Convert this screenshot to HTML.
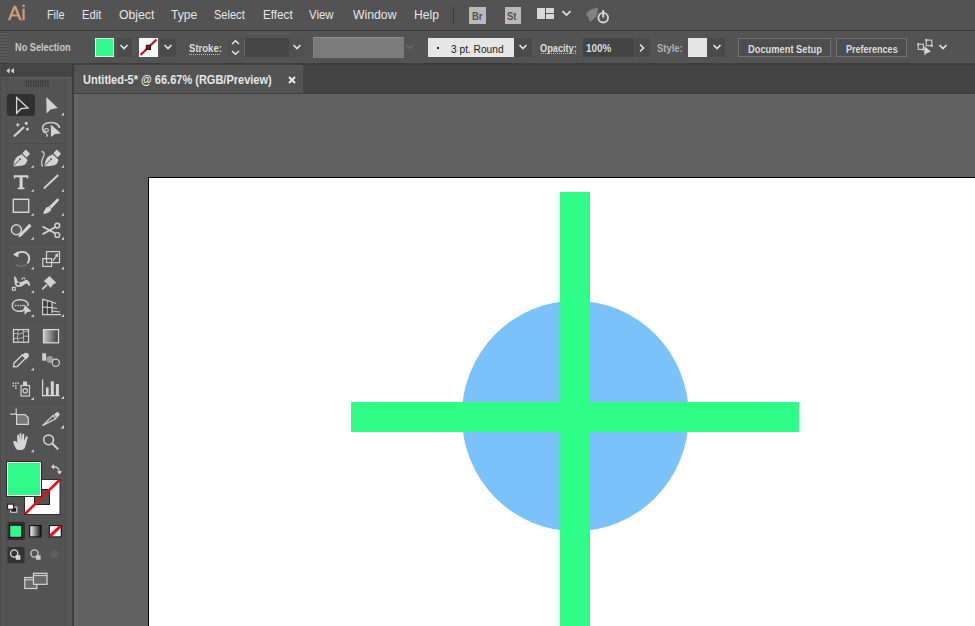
<!DOCTYPE html>
<html><head><meta charset="utf-8">
<style>
*{margin:0;padding:0;box-sizing:border-box}
html,body{width:975px;height:626px;overflow:hidden;background:#606060;font-family:"Liberation Sans",sans-serif}
.a{position:absolute}
.t{position:absolute;white-space:nowrap;line-height:1;transform-origin:0 0}
#menubar{left:0;top:0;width:975px;height:30px;background:#535353}
#menuline{left:0;top:30px;width:975px;height:1px;background:#383838}
#ctrl{left:0;top:31px;width:975px;height:33px;background:#535353}
#ctrlline{left:0;top:63px;width:975px;height:2px;background:#3c3c3c}
.mi{font-size:13px;color:#e6e6e6;top:8px}
.lb{font-size:10.4px;color:#dcdcdc;font-weight:bold}
#tabstrip{left:72px;top:65px;width:903px;height:29px;background:#444444}
#tab{left:73px;top:65px;width:230px;height:28px;background:#535353}
#tools{left:0;top:64px;width:72px;height:562px;background:#535353}
#canvas{left:72px;top:94px;width:903px;height:532px;background:#606060}
#artboard{left:148px;top:177px;width:827px;height:449px;background:#fff;border-left:1px solid #000;border-top:1px solid #000}
.dd{position:absolute;background:#4a4a4a}
</style></head><body>
<div id="menubar" class="a"></div>
<div id="menuline" class="a"></div>
<div id="ctrl" class="a"></div>
<div id="ctrlline" class="a"></div>

<!-- menu -->
<div class="t" style="left:8px;top:3px;font-size:20px;color:#cf9f7c;-webkit-text-stroke:0.4px #cf9f7c">Ai</div>
<div class="t mi" style="left:46.5px;transform:scaleX(0.83)">File</div>
<div class="t mi" style="left:81.5px;transform:scaleX(0.86)">Edit</div>
<div class="t mi" style="left:119px;transform:scaleX(0.94)">Object</div>
<div class="t mi" style="left:171px;transform:scaleX(0.93)">Type</div>
<div class="t mi" style="left:214px;transform:scaleX(0.85)">Select</div>
<div class="t mi" style="left:262.5px;transform:scaleX(0.9)">Effect</div>
<div class="t mi" style="left:309px;transform:scaleX(0.88)">View</div>
<div class="t mi" style="left:353px;transform:scaleX(0.94)">Window</div>
<div class="t mi" style="left:414px;transform:scaleX(0.93)">Help</div>
<div class="a" style="left:453px;top:6px;width:1px;height:18px;background:#3e3e3e"></div>
<div class="a" style="left:469px;top:7px;width:16.5px;height:16.5px;background:#bababa"></div>
<div class="t" style="left:471.5px;top:10.5px;font-size:10.5px;color:#505050;font-weight:bold;transform:scaleX(0.9)">Br</div>
<div class="a" style="left:504.5px;top:7px;width:16.5px;height:16.5px;background:#bababa"></div>
<div class="t" style="left:507px;top:10.5px;font-size:10.5px;color:#505050;font-weight:bold;transform:scaleX(0.9)">St</div>
<svg class="a" style="left:536px;top:7px" width="40" height="14">
  <rect x="1" y="1" width="8" height="11" fill="#d8d8d8"/>
  <rect x="10" y="1" width="8" height="5" fill="#d8d8d8"/>
  <rect x="10" y="7" width="8" height="5" fill="#d8d8d8"/>
  <path d="M26.5 4.2 L30.5 8 L34.5 4.2" stroke="#e0e0e0" stroke-width="1.7" fill="none"/>
</svg>
<svg class="a" style="left:584px;top:5px" width="28" height="20">
  <path d="M2 9 C5 5 9 3 14 2.5 C13 6 14 9 12 12 C9 14 8 16 6 17 C5 14 4 12 2 9 Z" fill="#8a8a8a" opacity="0.85"/>
  <circle cx="19.2" cy="12.7" r="4.8" stroke="#d6d6d6" stroke-width="1.9" fill="none"/>
  <rect x="18.2" y="5" width="2" height="7.5" fill="#d6d6d6"/>
</svg>

<!-- control bar -->
<div class="a" style="left:0;top:32px;width:8px;height:31px;background:repeating-linear-gradient(#4a4a4a 0 1px,#5a5a5a 1px 3px)"></div>
<div class="t lb" style="left:15px;top:42.5px;transform:scaleX(0.884);color:#c8c8c8">No Selection</div>
<!-- fill swatch -->
<div class="a" style="left:95px;top:38px;width:19px;height:19px;background:#e8f5ee"></div>
<div class="a" style="left:96px;top:39px;width:17px;height:17px;background:#2ff98a"></div>
<div class="dd" style="left:117px;top:38px;width:15px;height:19px"></div>
<svg class="a" style="left:119px;top:43px" width="10" height="8"><path d="M1.5 2 L5 5.5 L8.5 2" stroke="#e6e6e6" stroke-width="1.6" fill="none"/></svg>
<!-- stroke swatch -->
<div class="a" style="left:139px;top:38px;width:19px;height:19px;background:#f8f8f8"></div>
<svg class="a" style="left:139px;top:38px" width="19" height="19"><line x1="1.5" y1="17" x2="17.5" y2="1.5" stroke="#cc0a14" stroke-width="2"/><rect x="7.3" y="7.3" width="4.2" height="4.2" fill="#c00010" stroke="#1a1a1a" stroke-width="1"/></svg>
<div class="dd" style="left:160px;top:38px;width:16px;height:19px"></div>
<svg class="a" style="left:163px;top:43px" width="10" height="8"><path d="M1.5 2 L5 5.5 L8.5 2" stroke="#e6e6e6" stroke-width="1.6" fill="none"/></svg>
<!-- Stroke label -->
<div class="t lb" style="left:189px;top:44px;transform:scaleX(0.92)">Stroke:</div>
<div class="a" style="left:189px;top:54px;width:31px;height:1px;background:repeating-linear-gradient(90deg,#bbb 0 1px,transparent 1px 2px)"></div>
<div class="dd" style="left:227px;top:38px;width:77px;height:19px;background:#505050"></div>
<div class="a" style="left:245px;top:38px;width:44px;height:19px;background:#454545"></div><div class="a" style="left:244px;top:39px;width:1px;height:17px;background:#686868"></div><div class="a" style="left:248px;top:33px;width:41px;height:1px;background:#5d5d5d"></div>
<svg class="a" style="left:229px;top:39px" width="14" height="17"><path d="M3 5 L6.5 1.8 L10 5" stroke="#e6e6e6" stroke-width="1.5" fill="none"/><path d="M3 12 L6.5 15.2 L10 12" stroke="#e6e6e6" stroke-width="1.5" fill="none"/></svg>
<svg class="a" style="left:292px;top:43px" width="10" height="8"><path d="M1.5 2 L5 5.5 L8.5 2" stroke="#e6e6e6" stroke-width="1.6" fill="none"/></svg>
<!-- gray disabled bar -->
<div class="a" style="left:312.5px;top:36.5px;width:91px;height:21.5px;background:#7b7b7b;border-top:1.5px solid #8c8c8c;border-left:1.5px solid #868686"></div>
<svg class="a" style="left:405px;top:43px" width="10" height="8"><path d="M1.5 2 L5 5.5 L8.5 2" stroke="#6a6a6a" stroke-width="1.4" fill="none"/></svg>
<!-- 3 pt round -->
<div class="a" style="left:428px;top:38px;width:86px;height:19px;background:#e6e6e6"></div>
<div class="a" style="left:437px;top:46.5px;width:2px;height:2px;background:#222"></div>
<div class="t" style="left:451px;top:43.5px;font-size:10.6px;color:#1a1a1a;transform:scaleX(0.96)">3 pt. Round</div>
<div class="dd" style="left:514px;top:38px;width:18px;height:19px"></div>
<svg class="a" style="left:518px;top:43px" width="10" height="8"><path d="M1.5 2 L5 5.5 L8.5 2" stroke="#e6e6e6" stroke-width="1.6" fill="none"/></svg>
<!-- opacity -->
<div class="t lb" style="left:540px;top:43.5px;transform:scaleX(0.885)">Opacity:</div>
<div class="a" style="left:541px;top:53px;width:35px;height:1px;background:repeating-linear-gradient(90deg,#bbb 0 1px,transparent 1px 2px)"></div>
<div class="a" style="left:583px;top:38px;width:51px;height:19px;background:#444"></div>
<div class="t lb" style="left:585.5px;top:44px;transform:scaleX(0.95)">100%</div>
<div class="dd" style="left:635px;top:38px;width:15px;height:19px"></div>
<svg class="a" style="left:638px;top:43px" width="8" height="10"><path d="M2 1.5 L5.5 5 L2 8.5" stroke="#e6e6e6" stroke-width="1.6" fill="none"/></svg>
<!-- style -->
<div class="t lb" style="left:657px;top:44px;transform:scaleX(0.91);color:#b0b0b0">Style:</div>
<div class="a" style="left:688px;top:38px;width:19px;height:19px;background:#e4e4e4"></div>
<div class="dd" style="left:708px;top:38px;width:17px;height:19px"></div>
<svg class="a" style="left:712px;top:43px" width="10" height="8"><path d="M1.5 2 L5 5.5 L8.5 2" stroke="#e6e6e6" stroke-width="1.6" fill="none"/></svg>
<!-- buttons -->
<div class="a" style="left:738px;top:38px;width:93px;height:19px;border:1px solid #707070;background:#4d4d4d"></div>
<div class="t lb" style="left:748px;top:44.5px;transform:scaleX(0.896)">Document Setup</div>
<div class="a" style="left:836px;top:38px;width:71px;height:19px;border:1px solid #707070;background:#4d4d4d"></div>
<div class="t lb" style="left:845.5px;top:44.5px;transform:scaleX(0.868)">Preferences</div>
<svg class="a" style="left:914px;top:37px" width="36" height="22">
  <rect x="4.2" y="7.2" width="5.2" height="5.2" fill="none" stroke="#d0d0d0" stroke-width="1.1"/>
  <rect x="12.2" y="3.1" width="5.6" height="5.6" fill="none" stroke="#d0d0d0" stroke-width="1.1"/>
  <path d="M3.2 6.2h2v2h-2zM8.4 11.4h2v2h-2zM11.2 2.1h2v2h-2zM16.8 7.7h2v2h-2z" fill="#d0d0d0"/>
  <path d="M10.4 9.3 L10.4 18.5 L12.6 16.2 L17 14.4 Z" fill="#d6d6d6"/>
  <path d="M25.5 8 L29 11.5 L32.5 8" stroke="#e6e6e6" stroke-width="1.6" fill="none"/>
</svg>

<div id="tabstrip" class="a"></div>
<div id="tab" class="a"></div><div class="a" style="left:72px;top:93px;width:903px;height:1px;background:#3d3d3d"></div>
<div class="t" style="left:83px;top:73.5px;font-size:12px;color:#e6e6e6;font-weight:bold;transform:scaleX(0.917)">Untitled-5* @ 66.67% (RGB/Preview)</div>
<svg class="a" style="left:287px;top:75px" width="10" height="10"><path d="M2 2 L8 8 M8 2 L2 8" stroke="#eee" stroke-width="1.8"/></svg>
<div id="tools" class="a"></div>
<div id="canvas" class="a"></div>
<!-- toolbar -->
<div class="a" style="left:0;top:64px;width:72px;height:14px;background:#454545"></div>
<div class="a" style="left:0;top:77px;width:72px;height:1px;background:#5c5c5c"></div>
<svg class="a" style="left:5px;top:67px" width="11" height="8"><path d="M4.6 1 L1.2 3.8 L4.6 6.6 Z M9 1 L5.6 3.8 L9 6.6 Z" fill="#cfcfcf"/></svg>
<svg class="a" style="left:0;top:0" width="60" height="90"><rect x="25.8" y="80" width="1.1" height="7" fill="#3e3e3e"/><rect x="28.2" y="80" width="1.1" height="7" fill="#3e3e3e"/><rect x="30.6" y="80" width="1.1" height="7" fill="#3e3e3e"/><rect x="33.0" y="80" width="1.1" height="7" fill="#3e3e3e"/><rect x="35.4" y="80" width="1.1" height="7" fill="#3e3e3e"/><rect x="37.8" y="80" width="1.1" height="7" fill="#3e3e3e"/><rect x="40.2" y="80" width="1.1" height="7" fill="#3e3e3e"/><rect x="42.6" y="80" width="1.1" height="7" fill="#3e3e3e"/><rect x="45.0" y="80" width="1.1" height="7" fill="#3e3e3e"/><rect x="47.4" y="80" width="1.1" height="7" fill="#3e3e3e"/></svg>
<div class="a" style="left:6px;top:78px;width:1px;height:548px;background:#4b4b4b"></div>
<div class="a" style="left:65px;top:78px;width:1px;height:548px;background:#4b4b4b"></div>
<div class="a" style="left:66px;top:78px;width:6px;height:548px;background:#555555"></div>
<div class="a" style="left:71.5px;top:65px;width:2.5px;height:561px;background:#3c3c3c"></div><div class="a" style="left:0;top:64px;width:1px;height:562px;background:#4a4a4a"></div>
<div class="a" style="left:74px;top:94px;width:4px;height:532px;background:#656565"></div>
<div class="a" style="left:7px;top:94px;width:28px;height:22px;background:#303030;border-radius:3px"></div>
<svg class="a" style="left:0;top:0" width="72" height="626">
<g fill="#d2d2d2" stroke="none">
<!-- sub-tool triangles -->
<path d="M61 115.5 L64 115.5 L64 112.5 Z"/>
<path d="M31 167.8 L33.8 167.8 L33.8 165 Z"/><path d="M61.3 167.8 L64 167.8 L64 165 Z"/>
<path d="M31 191.8 L33.8 191.8 L33.8 189 Z"/><path d="M61.3 191.8 L64 191.8 L64 189 Z"/>
<path d="M31 215.8 L33.8 215.8 L33.8 213 Z"/><path d="M61.3 215.8 L64 215.8 L64 213 Z"/>
<path d="M31 239.7 L33.8 239.7 L33.8 236.8 Z"/><path d="M61.3 239.7 L64 239.7 L64 236.8 Z"/>
<path d="M31 269.6 L33.8 269.6 L33.8 266.6 Z"/><path d="M61.3 269.6 L64 269.6 L64 266.6 Z"/>
<path d="M31 293 L33.8 293 L33.8 290 Z"/><path d="M61.3 293 L64 293 L64 290 Z"/>
<path d="M31 317 L33.8 317 L33.8 314 Z"/><path d="M61.3 317 L64 317 L64 314 Z"/>
<path d="M30.9 370.6 L33.9 370.6 L33.9 367.6 Z"/>
<path d="M30.9 400 L33.9 400 L33.9 397 Z"/><path d="M61 399 L64 399 L64 396 Z"/>
<path d="M60.6 428.4 L64 428.4 L64 425 Z"/>
<path d="M30.9 452.2 L33.9 452.2 L33.9 449 Z"/>
</g>
<g stroke="#4b4b4b" stroke-width="1">
<line x1="8" y1="143.5" x2="64" y2="143.5"/>
<line x1="8" y1="243.5" x2="64" y2="243.5"/>
<line x1="8" y1="321.5" x2="64" y2="321.5"/>
<line x1="8" y1="403.5" x2="64" y2="403.5"/>
</g>
<!-- selection -->
<path d="M16.6 97.5 L28 108 L21 108.7 L16.6 113.3 Z" fill="none" stroke="#d8d8d8" stroke-width="1.3" stroke-linejoin="miter"/>
<path d="M46.3 97 L57.8 108 L50.5 109.5 L46.6 113.6 Z" fill="#d2d2d2"/>
<!-- magic wand -->
<line x1="13.8" y1="136.5" x2="24" y2="127" stroke="#d2d2d2" stroke-width="2.2"/>
<path d="M17.8 122.5 L18.6 124.2 L20.3 124.8 L18.6 125.4 L17.8 127.2 L17 125.4 L15.3 124.8 L17 124.2 Z" fill="#d2d2d2"/>
<circle cx="26.2" cy="123.3" r="1.5" fill="#d2d2d2"/>
<circle cx="27.4" cy="129.2" r="1.4" fill="#d2d2d2"/>
<!-- lasso -->
<path d="M45 133 C41 129 42 124 48 122.8 C54 121.8 59 124 59.5 128" fill="none" stroke="#cfcfcf" stroke-width="1.5"/>
<circle cx="46.5" cy="130.3" r="1.8" fill="none" stroke="#cfcfcf" stroke-width="1.2"/>
<path d="M47 134 L47 137 M45.5 132 C46 134 47 135 48 136" stroke="#cfcfcf" stroke-width="1" fill="none"/>
<path d="M50.8 124.5 L61 133.5 L55 134 L51 137 Z" fill="#d2d2d2"/>
<!-- pen -->
<g fill="#d4d4d4">
<path d="M13.3 166.2 C13.8 162 15 158.5 17.5 156.5 L21.8 154.3 L27.6 160 L25.5 164.2 C23.2 165.8 18.5 166.2 13.3 166.2 Z"/>
<path d="M22.4 153.2 L25.8 149.6 L30 153.8 L26.6 157.4 Z"/>
<path d="M44.3 166.2 C44.8 162 46 158.5 48.5 156.5 L52.8 154.3 L58.6 160 L56.5 164.2 C54.2 165.8 49.5 166.2 44.3 166.2 Z"/>
<path d="M53.4 153.2 L56.8 149.6 L61 153.8 L57.6 157.4 Z"/>
</g>
<path d="M13.6 165.7 L19.5 159.8 M44.6 165.7 L50.5 159.8" stroke="#535353" stroke-width="1"/>
<circle cx="20" cy="159.3" r="1" fill="#535353"/><circle cx="51" cy="159.3" r="1" fill="#535353"/>
<path d="M42.5 166.5 C40 162 42.5 159 43.8 156 C44.8 153.5 44 151.5 41.5 151.5" fill="none" stroke="#cfcfcf" stroke-width="1.3"/>
<!-- type -->
<path d="M13.8 175.2 H28.3 V178.6 H26.8 V177.2 H22.6 V187.4 H24.4 V189.2 H17.8 V187.4 H19.6 V177.2 H15.3 V178.6 H13.8 Z" fill="#d6d6d6"/>
<!-- line -->
<line x1="43.8" y1="188.5" x2="58.2" y2="175" stroke="#d2d2d2" stroke-width="1.8"/>
<!-- rect -->
<rect x="13.3" y="199.3" width="15.4" height="13" fill="#5c5c5c" stroke="#d6d6d6" stroke-width="1.4"/>
<!-- brush -->
<path d="M57.5 198.3 L59.3 200 L51.5 208.5 L49 206.5 Z" fill="#d6d6d6"/>
<path d="M48.5 206.5 L51.5 209 C50.5 212 47 213.8 43.2 213.8 C44 210.5 45.5 207.5 48.5 206.5 Z" fill="#d6d6d6"/>
<!-- shaper -->
<circle cx="16.4" cy="229.8" r="5" fill="#5a5a5a" stroke="#d2d2d2" stroke-width="1.4"/>
<path d="M29.2 223.8 L31.6 226 L21 236.6 L18.6 237.5 L18.8 235 Z" fill="#d4d4d4"/>
<!-- scissors -->
<circle cx="57.3" cy="225.6" r="2.4" fill="none" stroke="#d4d4d4" stroke-width="1.4"/>
<circle cx="57.3" cy="235" r="2.4" fill="none" stroke="#d4d4d4" stroke-width="1.4"/>
<path d="M42.5 226.5 L55.5 233.5 M42.5 234.3 L55.5 227" stroke="#d4d4d4" stroke-width="1.8"/>
<!-- rotate -->
<path d="M17 253.6 C20 251.2 25.5 251 28 254.5 C29.8 257.5 29.3 261 27.4 263.4" fill="none" stroke="#d6d6d6" stroke-width="1.9"/>
<path d="M26 264.8 C23 266.8 18 266.6 15.2 263.8" fill="none" stroke="#8f8f8f" stroke-width="1.3" stroke-dasharray="1.6 1.2"/>
<path d="M13 254.6 L18.4 251.2 L18.4 257.6 Z" fill="#d6d6d6"/>
<!-- scale -->
<rect x="46.5" y="251.6" width="13" height="11" fill="none" stroke="#d2d2d2" stroke-width="1.2"/>
<rect x="42.8" y="258.6" width="8.8" height="7.8" fill="none" stroke="#d2d2d2" stroke-width="1.2"/>
<path d="M53 260.6 L57.4 254.6" stroke="#d2d2d2" stroke-width="1.3"/>
<path d="M58.2 253.2 L58 257.2 L54.6 255 Z" fill="#d2d2d2"/>
<!-- width/puppet -->
<path d="M14.2 276.3 C15.8 276 16.8 278.5 17.2 280.5 C18.5 282.2 20.5 282.6 22.5 281.6 C24.5 280.2 26.2 279.4 27.8 280.4 C29.3 281.5 30.2 283.5 30.1 285.8 L28.4 285.8 C28 284.2 27 283.3 25.6 283.7 C23.6 285 21.5 287 18.2 287 C16.2 287 15.2 286 14.9 284 C14.6 281 14 278.8 14.2 276.3 Z" fill="#d0d0d0"/>
<circle cx="18.2" cy="283.8" r="1.5" fill="#535353"/>
<rect x="12.4" y="287.4" width="2.8" height="2.8" fill="none" stroke="#dadada" stroke-width="1.1"/>
<path d="M21.8 279.6 C22 277.2 24.8 277.2 25 279.4" fill="none" stroke="#d0d0d0" stroke-width="1.2"/>
<!-- pin -->
<path d="M49.5 276 L56.4 282.9 L54 283.8 L50.2 288 L49.3 286.2 L45.2 282.1 L43.6 281.4 L47.8 277.5 Z" fill="#d0d0d0"/>
<line x1="47" y1="284.6" x2="42.3" y2="289.4" stroke="#d0d0d0" stroke-width="1.8"/>
<!-- shape builder -->
<path d="M24 308 C26 310 22 311.5 18 311.2 C13.5 310.8 11.8 307.5 12.4 304.5 C13 301 17 299.5 21 299.8 C25.5 300.2 28.5 302.5 28.2 306" fill="none" stroke="#d0d0d0" stroke-width="1.5"/>
<g fill="#e0e0e0"><circle cx="15.8" cy="305.6" r="0.8"/><circle cx="18.3" cy="305.6" r="0.8"/><circle cx="20.8" cy="305.6" r="0.8"/><circle cx="23.1" cy="305.6" r="0.8"/></g>
<path d="M24.3 304.6 L31.4 311.3 L27.4 312 L24.6 314.8 Z" fill="#d4d4d4"/>
<!-- perspective grid -->
<g stroke="#d0d0d0" stroke-width="1.2" fill="none">
<path d="M42.6 299.2 V314.6 H61"/>
<path d="M42.6 299.2 L52 302 L52 313 M42.6 307 L52 307.5 M47.2 300.5 V314 M52 302 L56 303.5 M52 307.5 L57 308.5 M52 311 L60 312"/>
</g>
<g fill="#3c3c3c"><rect x="43.6" y="301.2" width="3" height="5"/><rect x="47.8" y="302" width="3.2" height="4.8"/><rect x="43.6" y="308" width="3" height="5.5"/><rect x="47.8" y="308.3" width="3.2" height="5"/></g>
<!-- mesh -->
<rect x="13.5" y="329.6" width="15" height="12.6" fill="#4a4a4a" stroke="#d2d2d2" stroke-width="1.3"/>
<path d="M14 334 C17 332 19 336 22 333 C24.5 331 26 332.5 28 331 M14 339 C17 337 20 340 23 337 C25 335 27 337 28 336 M18 330 C19 334 16 337 18.5 342 M23.5 330 C22 334 25 338 23 342" fill="none" stroke="#bdbdbd" stroke-width="1"/>
<!-- gradient -->
<defs><linearGradient id="gr" x1="0" x2="1"><stop offset="0" stop-color="#c8c8c8"/><stop offset="1" stop-color="#3a3a3a"/></linearGradient>
<linearGradient id="gr2" x1="0" x2="1"><stop offset="0" stop-color="#f2f2f2"/><stop offset="1" stop-color="#1a1a1a"/></linearGradient></defs>
<rect x="43.5" y="329.6" width="15" height="13.2" fill="url(#gr)" stroke="#d8d8d8" stroke-width="1.3"/>
<!-- eyedropper -->
<path d="M13.5 366.8 L14 363.2 L22.5 354.7 L25.8 358 L17.3 366.5 Z" fill="none" stroke="#d0d0d0" stroke-width="1.4"/>
<path d="M22 355.5 L25 352.8 L28.6 353.5 L28.8 356.8 L26 359.5 Z" fill="#d4d4d4"/>
<!-- blend -->
<rect x="42.2" y="353.3" width="4" height="7.4" fill="#cfcfcf"/>
<circle cx="50" cy="359.6" r="3.5" fill="#9b9b9b"/>
<circle cx="55.8" cy="362.8" r="3.6" fill="#535353" stroke="#d0d0d0" stroke-width="1.2"/>
<!-- symbol sprayer -->
<g fill="#bfbfbf"><rect x="12.5" y="382.5" width="1.6" height="1.6"/><rect x="15" y="382.5" width="1.6" height="1.6"/><rect x="17.5" y="382.5" width="1.6" height="1.6"/><rect x="12.5" y="385" width="1.6" height="1.6"/><rect x="15" y="385" width="1.6" height="1.6"/><rect x="15" y="387.5" width="1.6" height="1.6"/></g>
<rect x="21" y="385.5" width="8.5" height="10.5" fill="none" stroke="#d0d0d0" stroke-width="1.2"/>
<rect x="23" y="381.5" width="4" height="3.5" fill="#d0d0d0"/>
<circle cx="25.2" cy="390.8" r="2.2" fill="none" stroke="#d0d0d0" stroke-width="1.2"/>
<!-- column graph -->
<path d="M42.6 379.6 V395.6 H59.5" fill="none" stroke="#d4d4d4" stroke-width="1.2"/>
<rect x="46" y="387.4" width="2.6" height="8" fill="#d4d4d4"/>
<rect x="50.8" y="381.3" width="3" height="14" fill="#d4d4d4"/>
<rect x="55.9" y="384" width="3" height="11.5" fill="#d4d4d4"/>
<!-- artboard -->
<path d="M16.2 408.6 V414.2 H10.2" fill="none" stroke="#cfcfcf" stroke-width="1.2"/>
<path d="M16.6 414.6 H25 L28.3 417.8 V424.4 H16.6 Z" fill="#777" stroke="#d4d4d4" stroke-width="1.2"/>
<!-- slice -->
<path d="M42.5 425.6 L53 415.5 L56 418.5 Z" fill="none" stroke="#d0d0d0" stroke-width="1.3"/>
<path d="M53.8 414.5 L57.5 411.8 L60 414.3 L57 418 Z" fill="#d4d4d4"/>
<!-- hand -->
<path d="M13 441.5 C14.5 440.5 16 441 17.2 442.5 L17.2 435.5 C17.2 434.3 19 434.3 19 435.5 L19.3 440 L19.6 433.8 C19.6 432.6 21.4 432.6 21.4 433.8 L21.6 440 L22.4 434.5 C22.5 433.3 24.3 433.5 24.2 434.7 L24 441 L25.8 436.8 C26.3 435.7 28 436.2 27.7 437.4 L25.5 446 C24.8 448.5 23.5 450 20.5 450 L18 450 C16 449.5 15 447.5 13 441.5 Z" fill="#d6d6d6"/>
<!-- zoom -->
<circle cx="48.6" cy="439.8" r="4.9" fill="none" stroke="#d4d4d4" stroke-width="1.5"/>
<line x1="52.3" y1="443.5" x2="58.2" y2="449.4" stroke="#d4d4d4" stroke-width="2"/>
<!-- fill/stroke -->
<rect x="24" y="479" width="36.5" height="36" fill="#2c2c2c"/>
<rect x="25" y="480" width="34.5" height="34" fill="#ffffff"/>
<rect x="34.5" y="489.5" width="15" height="15" fill="#535353" stroke="#1e1e1e" stroke-width="1"/>
<line x1="25" y1="514" x2="59.5" y2="480" stroke="#e0101e" stroke-width="2.6"/>
<rect x="6" y="461" width="36" height="36" fill="#2a2a2a"/>
<rect x="7" y="462" width="34" height="34" fill="#f0f0f0"/>
<rect x="8" y="463" width="32" height="32" fill="#30f98a"/>
<!-- swap -->
<path d="M52 467 C56 466 59 468 59.5 472" fill="none" stroke="#cfcfcf" stroke-width="1.3"/>
<path d="M51 466.8 L54 464 L54 469.6 Z M59.5 474.5 L56.8 471.2 L62.2 471.2 Z" fill="#d4d4d4"/>
<!-- default -->
<rect x="10.8" y="507.2" width="6" height="5" fill="#1c1c1c" stroke="#e8e8e8" stroke-width="1"/>
<rect x="7.6" y="504.2" width="6" height="5" fill="#ffffff" stroke="#1c1c1c" stroke-width="1"/>
<!-- color modes -->
<rect x="7.5" y="521.8" width="17.5" height="18.2" fill="#303030" rx="1.5"/>
<rect x="9" y="524.6" width="13.4" height="13.4" fill="#111"/>
<rect x="10.2" y="525.8" width="11" height="11" fill="#33f58a"/>
<rect x="29.2" y="525" width="12.4" height="12.4" fill="#111"/>
<rect x="30.3" y="526.1" width="10.2" height="10.2" fill="url(#gr2)"/>
<rect x="48.8" y="525" width="13" height="12.4" fill="#111"/>
<rect x="49.9" y="526.1" width="10.8" height="10.2" fill="#fff"/>
<line x1="50" y1="536.2" x2="60.6" y2="526.2" stroke="#e0101e" stroke-width="3"/>
<!-- drawing modes -->
<rect x="7.5" y="546.9" width="17" height="16.3" fill="#333" rx="1.5"/>
<circle cx="14.2" cy="553.5" r="3.6" fill="none" stroke="#d8d8d8" stroke-width="1.4"/>
<rect x="15.8" y="555.2" width="4.6" height="4.6" fill="#d8d8d8"/>
<circle cx="34.5" cy="553.5" r="3.6" fill="none" stroke="#c8c8c8" stroke-width="1.4"/>
<rect x="36" y="555.2" width="4.6" height="4.6" fill="#c8c8c8"/>
<circle cx="54.5" cy="554" r="4" fill="#5e5e5e"/>
<!-- screen mode -->
<rect x="24.8" y="577.5" width="12" height="11" fill="#6a6a6a" stroke="#d6d6d6" stroke-width="1.2"/>
<rect x="33.5" y="573.3" width="13.5" height="11" fill="#6a6a6a" stroke="#d6d6d6" stroke-width="1.2"/>
<line x1="33.5" y1="575.6" x2="47" y2="575.6" stroke="#d6d6d6" stroke-width="1"/>
<line x1="24.8" y1="579.8" x2="33.5" y2="579.8" stroke="#d6d6d6" stroke-width="1"/>
</svg>

<div id="artboard" class="a"></div>
<svg class="a" style="left:0;top:0" width="975" height="626">
  <ellipse cx="575.3" cy="416" rx="113.5" ry="115.3" fill="#7bc1fa"/>
  <rect x="560" y="192" width="30" height="434" fill="#30fc88"/>
  <rect x="351" y="402" width="448" height="30" fill="#30fc88"/>
</svg>
</body></html>
